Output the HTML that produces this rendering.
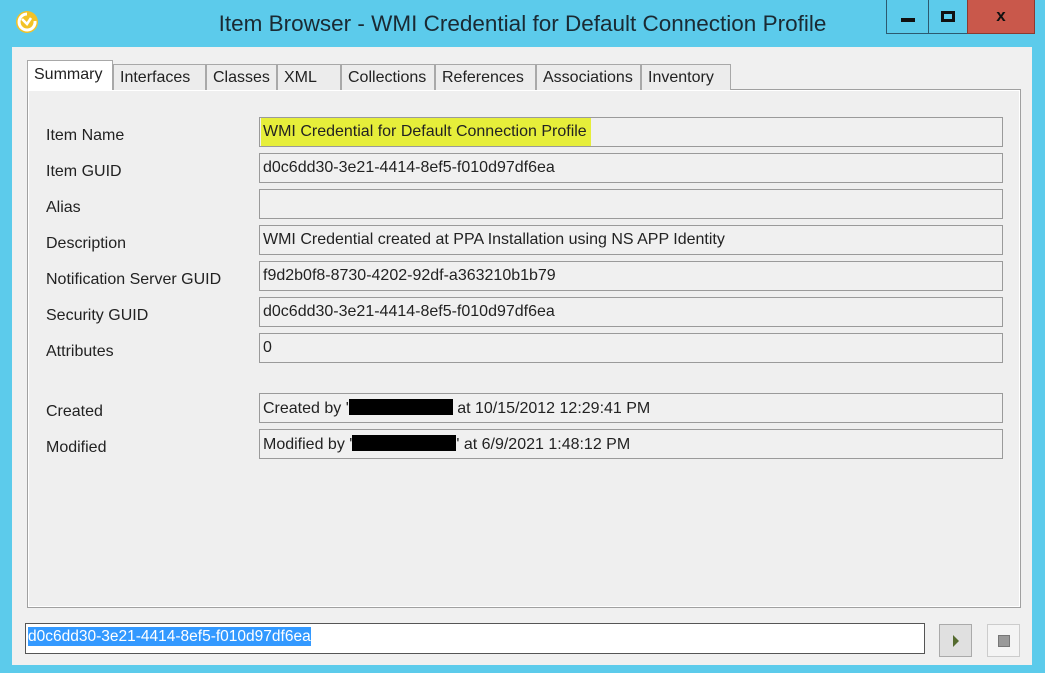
<!DOCTYPE html>
<html><head><style>
*{margin:0;padding:0;box-sizing:border-box}
body{width:1045px;height:673px;background:#5ccbeb;position:relative;overflow:hidden;font-family:"Liberation Sans",sans-serif;}
.abs{position:absolute}
.title{left:0;width:1045px;top:11px;text-align:center;font-size:22.5px;color:#1a2a33;}
.client{left:12px;top:47px;width:1020px;height:618px;background:#f0f0f0;}
.tab{position:absolute;top:64px;height:26px;border:1px solid #a8a8a8;border-bottom:none;background:#ececec;font-size:16px;color:#222;padding:4px 0 0 6px;white-space:nowrap;overflow:hidden}
.tab.sel{top:60px;height:30px;background:#fff;padding-top:5px;z-index:2}
.panel{left:27px;top:89px;width:994px;height:519px;border:1px solid #a0a0a0;background:#fff;}
.panel .in{position:absolute;left:1px;top:1px;right:1px;bottom:1px;background:#efefef;}
.lab{position:absolute;left:46px;font-size:16px;color:#222;}
.fld{position:absolute;left:259px;width:744px;height:30px;border:1px solid #9a9a9a;background:#f0f0f0;font-size:16px;color:#222;padding:5px 0 0 3px;white-space:nowrap}
.blk{display:inline-block;background:#000;height:16px;vertical-align:-2px}
.btn{position:absolute;top:0;height:34px;border:1px solid #2c5a70;border-top:none}
</style></head><body>
<svg class="abs" style="left:14px;top:9px" width="26" height="26" viewBox="0 0 26 26"><circle cx="13" cy="13" r="11" fill="#f2c227"/><path d="M13 5 A8 8 0 1 0 21 12" stroke="#fff" stroke-width="3" fill="none"/><path d="M8 10 L13 15 L17 9" stroke="#fff" stroke-width="2.5" fill="none"/></svg>
<div class="abs title">Item Browser - WMI Credential for Default Connection Profile</div>
<div class="btn" style="left:886px;width:43px;background:#5ccbeb"><div class="abs" style="left:14px;top:18px;width:14px;height:4px;background:#111"></div></div>
<div class="btn" style="left:928px;width:40px;background:#5ccbeb"><div class="abs" style="left:12px;top:11px;width:14px;height:11px;border:3px solid #111"></div></div>
<div class="btn" style="left:967px;width:68px;background:#c9584b;border-color:#8a3a30"><div class="abs" style="left:0;width:66px;top:6px;text-align:center;font-size:17px;font-weight:bold;color:#111">x</div></div>
<div class="abs client"></div>
<div class="abs panel"><div class="in"></div></div>
<div class="tab sel" style="left:27px;width:86px">Summary</div>
<div class="tab" style="left:113px;width:93px">Interfaces</div>
<div class="tab" style="left:206px;width:71px">Classes</div>
<div class="tab" style="left:277px;width:64px">XML</div>
<div class="tab" style="left:341px;width:94px">Collections</div>
<div class="tab" style="left:435px;width:101px">References</div>
<div class="tab" style="left:536px;width:105px">Associations</div>
<div class="tab" style="left:641px;width:90px">Inventory</div>

<div class="lab" style="top:127px">Item Name</div>
<div class="fld" style="top:117px"><span style="background:#e6ee3a;margin-left:-2px;padding:5px 4px 6px 2px">WMI Credential for Default Connection Profile</span></div>
<div class="lab" style="top:163px">Item GUID</div>
<div class="fld" style="top:153px">d0c6dd30-3e21-4414-8ef5-f010d97df6ea</div>
<div class="lab" style="top:199px">Alias</div>
<div class="fld" style="top:189px"></div>
<div class="lab" style="top:235px">Description</div>
<div class="fld" style="top:225px">WMI Credential created at PPA Installation using NS APP Identity</div>
<div class="lab" style="top:271px">Notification Server GUID</div>
<div class="fld" style="top:261px">f9d2b0f8-8730-4202-92df-a363210b1b79</div>
<div class="lab" style="top:307px">Security GUID</div>
<div class="fld" style="top:297px">d0c6dd30-3e21-4414-8ef5-f010d97df6ea</div>
<div class="lab" style="top:343px">Attributes</div>
<div class="fld" style="top:333px">0</div>
<div class="lab" style="top:403px">Created</div>
<div class="fld" style="top:393px">Created by '<span class="blk" style="width:104px"></span> at 10/15/2012 12:29:41 PM</div>
<div class="lab" style="top:439px">Modified</div>
<div class="fld" style="top:429px">Modified by '<span class="blk" style="width:104px"></span>' at 6/9/2021 1:48:12 PM</div>

<div class="abs" style="left:25px;top:623px;width:900px;height:31px;border:1px solid #555;background:#fff;padding:4px 0 0 2px;font-size:15.5px;white-space:nowrap"><span style="background:#3399ff;color:#fff;padding:1px 0">d0c6dd30-3e21-4414-8ef5-f010d97df6ea</span></div>
<div class="abs" style="left:939px;top:624px;width:33px;height:33px;border:1px solid #aaa;background:#e0e0e0"><div class="abs" style="left:13px;top:10px;border-left:6px solid #556b2f;border-top:6px solid transparent;border-bottom:6px solid transparent"></div></div>
<div class="abs" style="left:987px;top:624px;width:33px;height:33px;border:1px solid #ccc;background:#f4f4f4"><div class="abs" style="left:10px;top:10px;width:12px;height:12px;background:#999;border:1px solid #777"></div></div>
</body></html>
